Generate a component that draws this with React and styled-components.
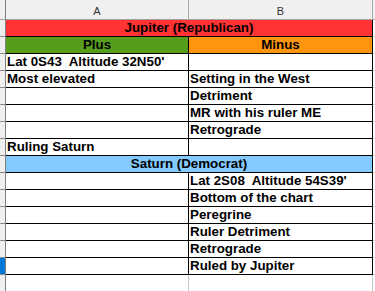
import React from "react";
import styled, { createGlobalStyle, css } from "styled-components";

const GlobalStyle = createGlobalStyle`
  html, body {
    margin: 0;
    padding: 0;
    background: #ffffff;
    overflow: hidden;
  }
  * { box-sizing: border-box; }
`;

const Sheet = styled.div`
  display: grid;
  grid-template-columns: 6px 183px 184px 2px;
  grid-template-rows: 20px;
  grid-auto-rows: 17px;
  width: 375px;
  height: 291px;
  overflow: hidden;
  font-family: "Liberation Sans", Arial, sans-serif;
`;

const Corner = styled.div`
  background: #efefef;
  border-right: 1px solid #808080;
  border-bottom: 1px solid #a0a0a0;
`;

const ColHeader = styled.div`
  background: #f0f0f0;
  border-right: 1px solid #a8a8a8;
  border-bottom: 1px solid #a0a0a0;
  display: flex;
  align-items: center;
  justify-content: center;
  padding-top: 2px;
  font-size: 11px;
  color: #333333;
`;

const RowHeader = styled.div`
  background: ${(p) => (p.$selected ? "#0078d7" : "#efefef")};
  border-right: 1px solid #808080;
  border-bottom: 1px solid #8a8a8a;
`;

const Cell = styled.div`
  background: ${(p) => p.$bg || "#ffffff"};
  border-right: 1px solid ${(p) => (p.$plain ? "#c8c8c8" : "#000000")};
  border-bottom: 1px solid ${(p) => (p.$plain ? "#c8c8c8" : "#000000")};
  font-size: 13.33px;
  font-weight: bold;
  line-height: 16px;
  color: #000000;
  white-space: pre;
  overflow: visible;
  padding-left: 1px;
  ${(p) =>
    p.$span &&
    css`
      grid-column: span 2;
    `}
  ${(p) =>
    p.$center &&
    css`
      text-align: center;
      padding-left: 0;
    `}
`;

const Filler = styled.div`
  background: #ffffff;
  border-bottom: 1px solid ${(p) => (p.$head ? "#a0a0a0" : "#d4d4d4")};
  ${(p) =>
    p.$head &&
    css`
      background: #f0f0f0;
    `}
`;

const rows = [
  { merged: "Jupiter (Republican)", bg: "#ff3333" },
  { a: "Plus", b: "Minus", bgA: "#579d1c", bgB: "#ff950e", center: true },
  { a: "Lat 0S43  Altitude 32N50'", b: "" },
  { a: "Most elevated", b: "Setting in the West" },
  { a: "", b: "Detriment" },
  { a: "", b: "MR with his ruler ME" },
  { a: "", b: "Retrograde" },
  { a: "Ruling Saturn", b: "" },
  { merged: "Saturn (Democrat)", bg: "#83caff" },
  { a: "", b: "Lat 2S08  Altitude 54S39'" },
  { a: "", b: "Bottom of the chart" },
  { a: "", b: "Peregrine" },
  { a: "", b: "Ruler Detriment" },
  { a: "", b: "Retrograde" },
  { a: "", b: "Ruled by Jupiter" },
];

export default function App() {
  return (
    <>
      <GlobalStyle />
      <Sheet>
        <Corner />
        <ColHeader>A</ColHeader>
        <ColHeader>B</ColHeader>
        <Filler $head />
        {rows.map((r, i) => (
          <React.Fragment key={i}>
            <RowHeader $selected={i === 14} />
            {r.merged ? (
              <Cell $span $center $bg={r.bg}>
                {r.merged}
              </Cell>
            ) : (
              <>
                <Cell $bg={r.bgA} $center={r.center}>
                  {r.a}
                </Cell>
                <Cell $bg={r.bgB} $center={r.center}>
                  {r.b}
                </Cell>
              </>
            )}
            <Filler />
          </React.Fragment>
        ))}
        <RowHeader />
        <Cell $plain />
        <Cell $plain />
        <Filler />
      </Sheet>
    </>
  );
}
